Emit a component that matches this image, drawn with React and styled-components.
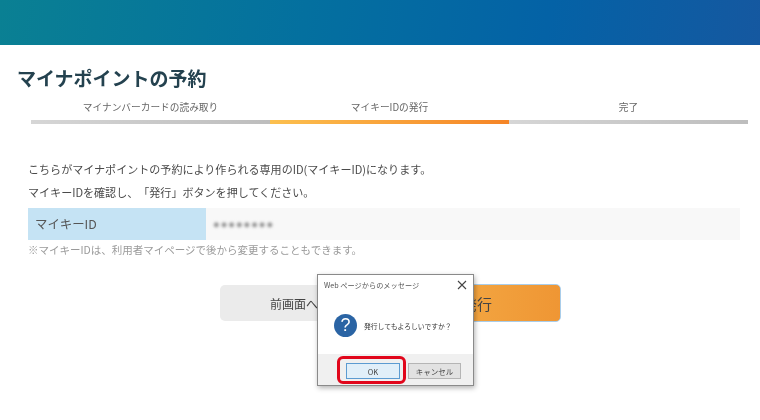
import styled, { createGlobalStyle } from 'styled-components';

const Global = createGlobalStyle`
  html, body {
    margin: 0;
    background: #fff;
  }
  body {
    font-family: "Noto Sans CJK JP", "Noto Sans", sans-serif;
    color: #444;
    text-spacing-trim: space-all;
  }
`;

// the reference is a soft, scaled-down capture
const Page = styled.div`
  position: relative;
  width: 760px;
  height: 420px;
  overflow: hidden;
  filter: blur(0.35px);
`;

const Header = styled.header`
  height: 45px;
  background: linear-gradient(100deg, #0a8093 0%, #04709f 40%, #0462a6 72%, #1558a0 100%);
`;

const Title = styled.h1`
  margin: 21px 0 0 17px;
  font-size: 19px;
  line-height: 24px;
  font-weight: 700;
  color: #24424f;
`;

const Steps = styled.ol`
  display: flex;
  list-style: none;
  margin: 10px 12px 0 31px;
  padding: 0;
`;

const Step = styled.li`
  flex: 1;
  font-size: 9.7px;
  line-height: 15px;
  text-align: center;
  color: #666;
  padding-bottom: 5px;
  border-bottom: 4px solid #c9c9c9;
  border-image: ${(p) => (p.$active ? 'linear-gradient(90deg, #fcc04f, #f58426) 1' : 'linear-gradient(90deg, #d6d6d6, #bdbdbd) 1')};
`;

const Content = styled.section`
  padding: 0 20px 0 28px;
  margin-top: 36px;
`;

const Lead = styled.p`
  margin: 0 0 5px;
  font-size: 11.05px;
  line-height: 18px;
  color: #4a4a4a;
`;

const IdRow = styled.div`
  display: flex;
  height: 32px;
  margin-top: 7px;
  background: #f8f8f8;
`;

const IdLabel = styled.div`
  display: flex;
  align-items: center;
  width: 178px;
  padding-left: 7px;
  box-sizing: border-box;
  font-size: 12.4px;
  color: #555;
  background: #c5e3f4;
`;

const IdValue = styled.div`
  display: flex;
  align-items: center;
  padding-left: 7px;
  font-family: "Liberation Sans", sans-serif;
  font-size: 11px;
  letter-spacing: 1px;
  color: #8a8a8a;
  filter: blur(1.5px);
`;

const Note = styled.p`
  margin: 2px 0 0;
  font-size: 10.5px;
  line-height: 16px;
  color: #9a9a9a;
`;

const Actions = styled.div`
  display: flex;
  align-items: center;
  margin: 26px 0 0 192px;
`;

const ActionButton = styled.button`
  padding: 0;
  border-radius: 5px;
  font-family: inherit;
  cursor: pointer;
`;

const BackButton = styled(ActionButton)`
  width: 172px;
  height: 36px;
  border: none;
  background: #ebebeb;
  font-size: 12px;
  color: #444;
`;

const IssueButton = styled(ActionButton)`
  width: 168px;
  height: 38px;
  margin-left: 1px;
  border: 1px solid #a9cdea;
  background: linear-gradient(90deg, #f5b04a, #ef9634);
  font-size: 15px;
  color: #444;
`;

const Dialog = styled.div`
  position: absolute;
  left: 317px;
  top: 274px;
  width: 157px;
  height: 112px;
  box-sizing: border-box;
  display: flex;
  flex-direction: column;
  background: #fff;
  border: 1px solid #8a8a8a;
  box-shadow: 1px 2px 5px rgba(0, 0, 0, 0.3);
`;

const DialogTitle = styled.div`
  display: flex;
  align-items: center;
  justify-content: space-between;
  height: 20px;
  padding: 0 6px;
  font-size: 7.2px;
  white-space: nowrap;
  color: #555;
`;

const CloseIcon = styled.svg`
  width: 10px;
  height: 10px;
  stroke: #444;
  stroke-width: 1.1;
`;

const DialogBody = styled.div`
  flex: 1;
  display: flex;
  align-items: center;
  gap: 7px;
  padding: 2px 0 0 16px;
  font-size: 6.8px;
  white-space: nowrap;
  color: #333;
`;

const QuestionIcon = styled.span`
  display: flex;
  align-items: center;
  justify-content: center;
  width: 23px;
  height: 23px;
  border-radius: 50%;
  background: #2a64a4;
  color: #fff;
  font-family: "Liberation Sans", sans-serif;
  font-size: 18px;
`;

const DialogFooter = styled.div`
  display: flex;
  justify-content: flex-end;
  gap: 8px;
  height: 31px;
  padding: 9px 12px 0 0;
  box-sizing: border-box;
  background: #f0f0f0;
`;

const DialogButton = styled.button`
  position: relative;
  width: ${(p) => (p.$primary ? '54px' : '53px')};
  height: 16px;
  padding: 0;
  font-family: inherit;
  font-size: 7.5px;
  color: #444;
  background: ${(p) => (p.$primary ? '#e1eff9' : '#e2e2e2')};
  border: 1px solid ${(p) => (p.$primary ? '#5c9bd1' : '#b5b5b5')};
`;

const Highlight = styled.span`
  position: absolute;
  left: -10px;
  top: -8px;
  width: 69px;
  height: 28px;
  box-sizing: border-box;
  border: 3px solid #e1061b;
  border-radius: 6px;
`;

export default function App() {
  return (
    <Page>
      <Global />
      <Header />
      <Title>マイナポイントの予約</Title>
      <Steps>
        <Step>マイナンバーカードの読み取り</Step>
        <Step $active>マイキーIDの発行</Step>
        <Step>完了</Step>
      </Steps>
      <Content>
        <Lead>こちらがマイナポイントの予約により作られる専用のID(マイキーID)になります。</Lead>
        <Lead>マイキーIDを確認し、「発行」ボタンを押してください。</Lead>
        <IdRow>
          <IdLabel>マイキーID</IdLabel>
          <IdValue>●●●●●●●●</IdValue>
        </IdRow>
        <Note>※マイキーIDは、利用者マイページで後から変更することもできます。</Note>
        <Actions>
          <BackButton>前画面へ戻る</BackButton>
          <IssueButton>発行</IssueButton>
        </Actions>
      </Content>
      <Dialog>
        <DialogTitle>
          <span>Web ページからのメッセージ</span>
          <CloseIcon viewBox="0 0 10 10">
            <path d="M1 1 L9 9 M9 1 L1 9" />
          </CloseIcon>
        </DialogTitle>
        <DialogBody>
          <QuestionIcon>?</QuestionIcon>
          <span>発行してもよろしいですか？</span>
        </DialogBody>
        <DialogFooter>
          <DialogButton $primary>
            <Highlight />
            OK
          </DialogButton>
          <DialogButton>キャンセル</DialogButton>
        </DialogFooter>
      </Dialog>
    </Page>
  );
}
